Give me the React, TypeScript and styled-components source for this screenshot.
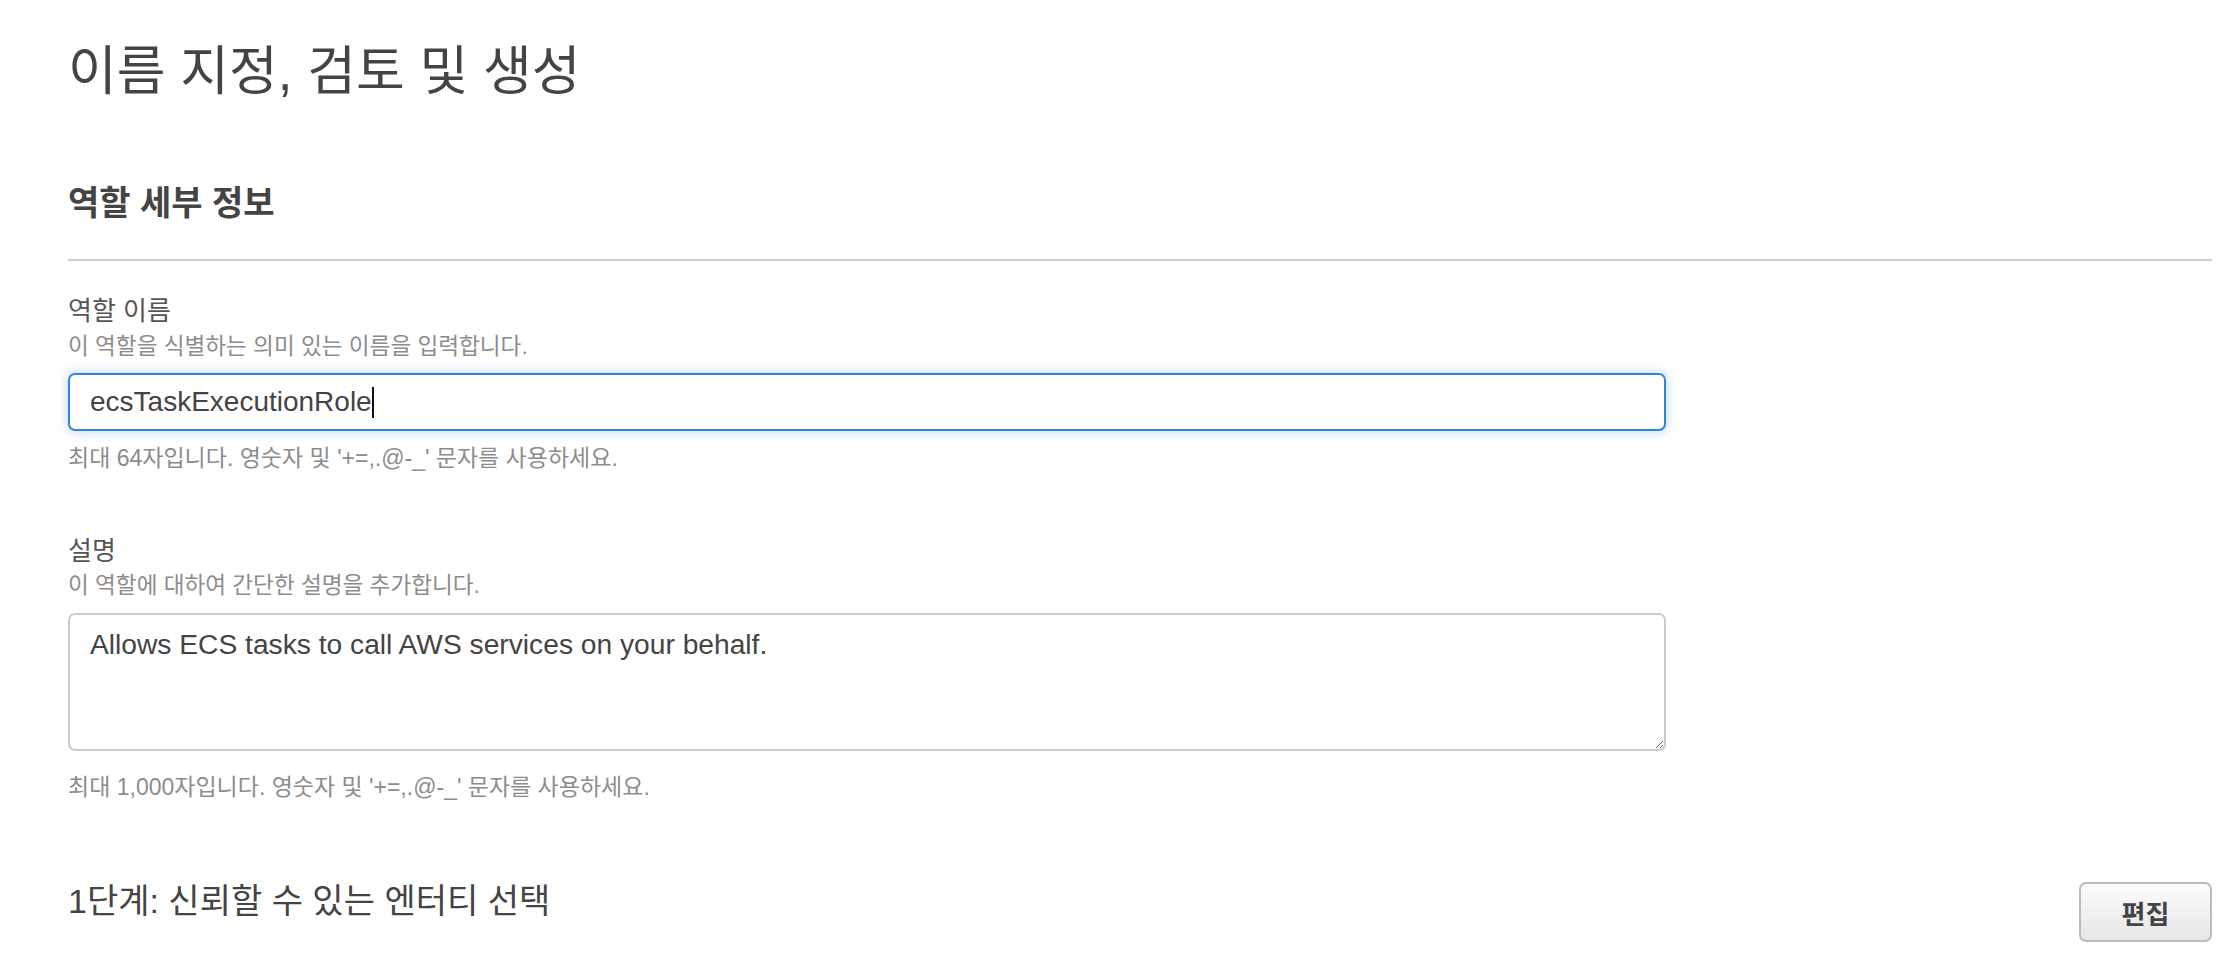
import styled, { createGlobalStyle } from 'styled-components';

const GlobalStyle = createGlobalStyle`
  html, body {
    margin: 0;
    padding: 0;
    background: #ffffff;
  }
  body {
    font-family: 'Liberation Sans', 'Noto Sans CJK KR', sans-serif;
    color: #444444;
  }
`;

const Page = styled.main`
  padding: 42px 18px 0 68px;
`;

const PageTitle = styled.h1`
  margin: 0;
  font-size: 53px;
  line-height: 60px;
  font-weight: 400;
  color: #444444;
`;

const Section = styled.section`
  margin-top: 81px;
`;

const SectionHeader = styled.div`
  padding-bottom: 36px;
  border-bottom: 2px solid #cfcfcf;
`;

const SectionTitle = styled.h2`
  margin: 0;
  font-size: 34px;
  line-height: 40px;
  font-weight: 700;
  color: #444444;
`;

const Field = styled.div<{ $gap: number }>`
  margin-top: ${(props) => props.$gap}px;
  width: 1598px;
`;

const Label = styled.div`
  font-size: 26px;
  line-height: 32px;
  color: #555555;
`;

const Hint = styled.div<{ $top: number; $size?: number }>`
  margin-top: ${(props) => props.$top}px;
  font-size: ${(props) => props.$size ?? 22.6}px;
  line-height: 28px;
  color: #8c8c8c;
`;

const TextInput = styled.div`
  margin-top: 12px;
  box-sizing: border-box;
  height: 58px;
  display: flex;
  align-items: center;
  padding: 0 20px;
  border: 2px solid #3184de;
  border-radius: 7px;
  box-shadow: 0 0 10px 2px rgba(49, 132, 222, 0.25);
  font-size: 28px;
  color: #444444;
`;

const Caret = styled.span`
  display: inline-block;
  width: 2px;
  height: 31px;
  background: #111111;
`;

const TextArea = styled.textarea`
  display: block;
  margin-top: 13px;
  box-sizing: border-box;
  width: 100%;
  height: 138px;
  padding: 12px 20px;
  border: 2px solid #cbcbcb;
  border-radius: 7px;
  font-family: 'Liberation Sans', 'Noto Sans CJK KR', sans-serif;
  font-size: 28.2px;
  line-height: 34px;
  color: #444444;
  resize: vertical;
  outline: none;
`;

const StepHeader = styled.div`
  margin-top: 80px;
  display: flex;
  justify-content: space-between;
  align-items: flex-start;
`;

const StepTitle = styled.h2`
  margin: 0;
  font-size: 34px;
  line-height: 40px;
  font-weight: 400;
  color: #444444;
`;

const EditButton = styled.button`
  margin-top: 1px;
  width: 133px;
  height: 60px;
  border: 2px solid #bbbbbb;
  border-radius: 7px;
  background: linear-gradient(#fcfcfc, #e6e6e6);
  font-family: 'Liberation Sans', 'Noto Sans CJK KR', sans-serif;
  font-size: 26px;
  font-weight: 700;
  color: #444444;
  cursor: pointer;
`;

function App() {
  return (
    <>
      <GlobalStyle />
      <Page>
        <PageTitle>이름 지정, 검토 및 생성</PageTitle>
        <Section>
          <SectionHeader>
            <SectionTitle>역할 세부 정보</SectionTitle>
          </SectionHeader>
          <Field $gap={34}>
            <Label>역할 이름</Label>
            <Hint $top={6}>이 역할을 식별하는 의미 있는 이름을 입력합니다.</Hint>
            <TextInput>
              ecsTaskExecutionRole
              <Caret />
            </TextInput>
            <Hint $top={13} $size={23}>
              최대 64자입니다. 영숫자 및 '+=,.@-_' 문자를 사용하세요.
            </Hint>
          </Field>
          <Field $gap={63}>
            <Label>설명</Label>
            <Hint $top={5}>이 역할에 대하여 간단한 설명을 추가합니다.</Hint>
            <TextArea defaultValue="Allows ECS tasks to call AWS services on your behalf." />
            <Hint $top={22} $size={23}>
              최대 1,000자입니다. 영숫자 및 '+=,.@-_' 문자를 사용하세요.
            </Hint>
          </Field>
        </Section>
        <StepHeader>
          <StepTitle>1단계: 신뢰할 수 있는 엔터티 선택</StepTitle>
          <EditButton>편집</EditButton>
        </StepHeader>
      </Page>
    </>
  );
}

export default App;
